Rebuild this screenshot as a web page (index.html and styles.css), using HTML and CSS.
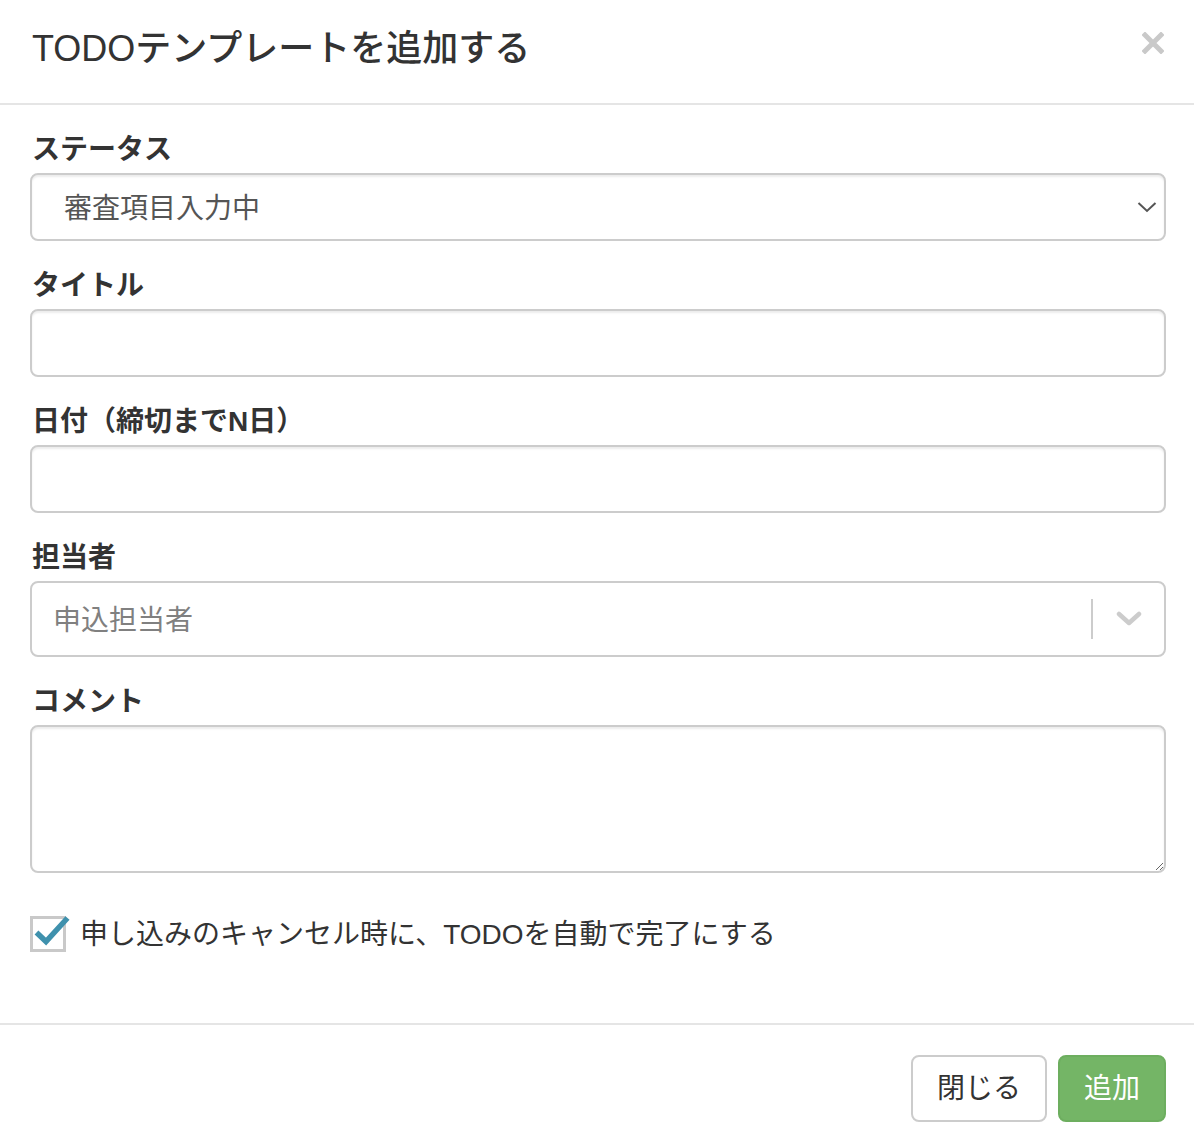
FILE: index.html
```html
<!DOCTYPE html>
<html lang="ja">
<head>
<meta charset="utf-8">
<link rel="stylesheet" href="styles.css">
</head>
<body>
<div class="modal">
  <div class="modal-header">
    <h4 class="modal-title">TODOテンプレートを追加する</h4>
    <span class="close" aria-label="close">
      <svg width="22" height="22" viewBox="0 0 22 22"><path d="M3 3 L19 19 M19 3 L3 19" stroke="#c9c9c9" stroke-width="5" stroke-linecap="square"/></svg>
    </span>
  </div>
  <div class="modal-body">
    <div class="form-group">
      <label class="label">ステータス</label>
      <div class="form-control select-native">
        <span>審査項目入力中</span>
        <svg width="20" height="12" viewBox="0 0 20 12"><path d="M1.5 2 L10 10 L18.5 2" fill="none" stroke="#555" stroke-width="2"/></svg>
      </div>
    </div>
    <div class="form-group">
      <label class="label">タイトル</label>
      <div class="form-control"></div>
    </div>
    <div class="form-group">
      <label class="label">日付（締切までN日）</label>
      <div class="form-control"></div>
    </div>
    <div class="form-group">
      <label class="label">担当者</label>
      <div class="react-select">
        <span class="placeholder">申込担当者</span>
        <div class="indicators">
          <span class="separator"></span>
          <svg width="26" height="18" viewBox="0 0 26 18"><path d="M3 4 L13 13 L23 4" fill="none" stroke="#cccccc" stroke-width="4.5" stroke-linejoin="round" stroke-linecap="round"/></svg>
        </div>
      </div>
    </div>
    <div class="form-group">
      <label class="label">コメント</label>
      <textarea class="form-control textarea"></textarea>
    </div>
    <div class="checkbox">
      <svg class="check-icon" width="40" height="40" viewBox="0 0 40 40">
        <rect x="1.5" y="4.5" width="33" height="33" fill="#fff" stroke="#c9c9c9" stroke-width="3"/>
        <path d="M6.5 19.5 L16 28.5 L37.5 5" fill="none" stroke="#3f91ad" stroke-width="5.5"/>
      </svg>
      <span class="check-label">申し込みのキャンセル時に、TODOを自動で完了にする</span>
    </div>
  </div>
  <div class="modal-footer">
    <button class="btn btn-default">閉じる</button>
    <button class="btn btn-success">追加</button>
  </div>
</div>
</body>
</html>
```
FILE: styles.css
```css
html, body {
  margin: 0;
  padding: 0;
  background: #fff;
}
body {
  font-family: "Liberation Sans", "Noto Sans CJK JP", sans-serif;
  color: #333;
}
.modal {
  width: 1194px;
  background: #fff;
}
.modal-header {
  display: flex;
  align-items: flex-start;
  justify-content: space-between;
  height: 105px;
  box-sizing: border-box;
  padding: 27px 30px 0 32px;
  border-bottom: 2px solid #e5e5e5;
}
.modal-title {
  margin: 0;
  font-size: 36px;
  line-height: 44px;
  font-weight: 500;
  color: #333;
}
.close {
  display: block;
  margin-top: 5px;
  margin-right: 0;
  width: 22px;
  height: 22px;
}
.modal-body {
  padding: 26px 28px 0 30px;
}
.form-group {
  margin-bottom: 26px;
}
.label {
  display: block;
  font-size: 28px;
  line-height: 32px;
  font-weight: 700;
  padding-top: 3px;
  margin: 0 0 7px 2px;
  color: #333;
}
.form-control {
  display: block;
  box-sizing: border-box;
  width: 100%;
  height: 68px;
  border: 2px solid #ccc;
  border-radius: 8px;
  background: #fff;
  box-shadow: inset 0 2px 2px rgba(0,0,0,.075);
  margin: 0;
  font-family: inherit;
}
.select-native {
  display: flex;
  align-items: center;
  justify-content: space-between;
  padding: 0 7px 0 32px;
  font-size: 28px;
  color: #555;
}
.select-native span {
  line-height: 32px;
  padding-top: 3px;
}
.react-select {
  display: flex;
  align-items: center;
  justify-content: space-between;
  box-sizing: border-box;
  height: 76px;
  border: 2px solid #ccc;
  border-radius: 8px;
  background: #fff;
  padding: 0 0 0 21px;
}
.placeholder {
  font-size: 28px;
  line-height: 32px;
  color: #808080;
  padding-top: 3px;
}
.indicators {
  display: flex;
  align-items: center;
  height: 100%;
}
.separator {
  width: 2px;
  height: 40px;
  background: #ccc;
  margin-right: 23px;
}
.indicators svg {
  margin-right: 22px;
}
.textarea {
  height: 148px;
  resize: vertical;
}
.checkbox {
  display: flex;
  align-items: center;
  margin-top: 40px;
  height: 40px;
  margin-bottom: 70px;
}
.check-icon {
  flex: none;
  margin-right: 10px;
}
.check-label {
  font-size: 28px;
  line-height: 32px;
  color: #333;
  margin-top: 3px;
}
.modal-footer {
  display: flex;
  justify-content: flex-end;
  gap: 11px;
  border-top: 2px solid #e5e5e5;
  padding: 30px 28px 16px 30px;
}
.btn {
  box-sizing: border-box;
  height: 67px;
  padding: 0 24px;
  font-family: inherit;
  font-size: 28px;
  line-height: 32px;
  border-radius: 8px;
  border: 2px solid #ccc;
  background: #fff;
  color: #333;
  cursor: pointer;
}
.btn-success {
  background: #74b566;
  border-color: #6dae5f;
  color: #fff;
}
```
